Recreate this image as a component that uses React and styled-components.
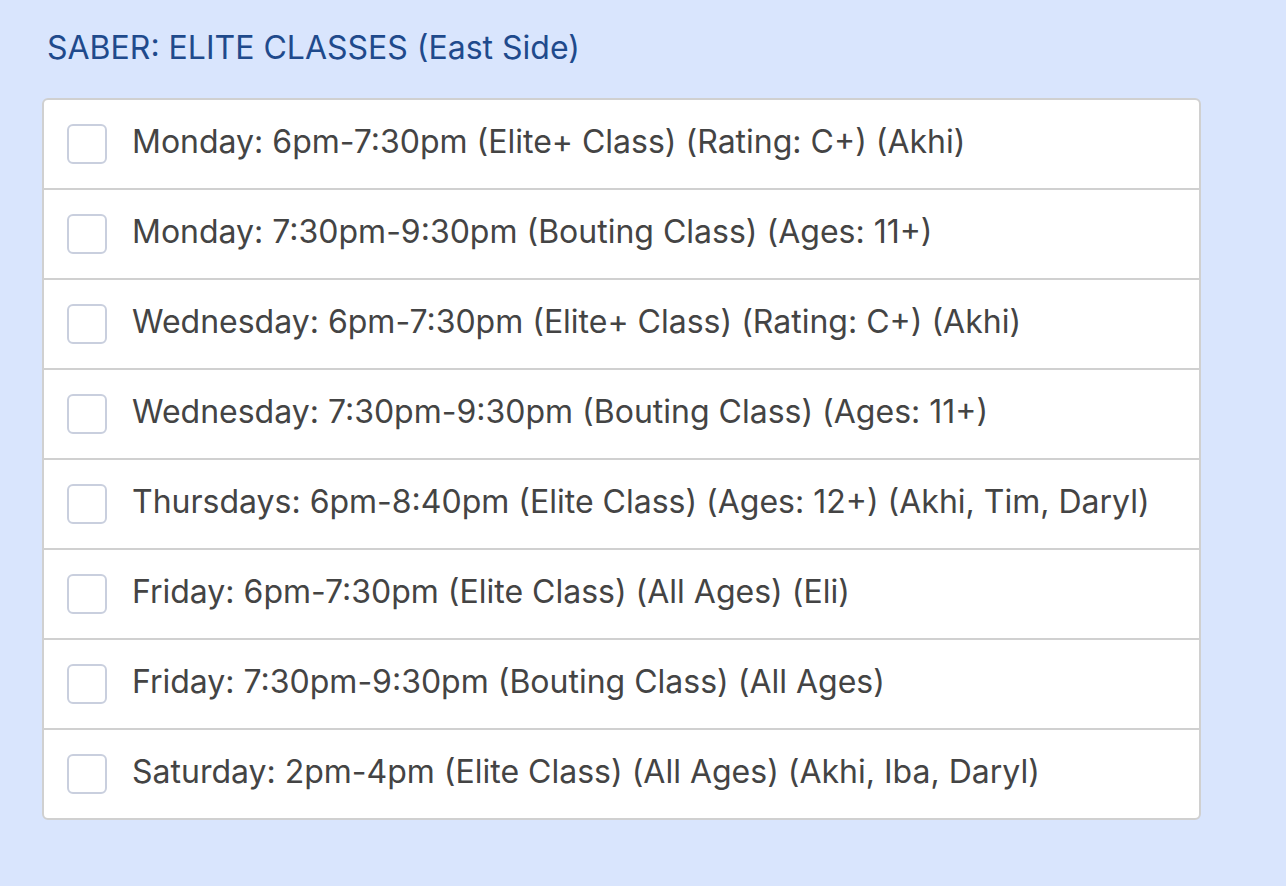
import React from "react";
import styled, { createGlobalStyle } from "styled-components";

const Global = createGlobalStyle`
  html, body { margin: 0; padding: 0; background: #d9e5fd; }
  body { font-family: Inter, "Noto Sans", sans-serif; }
`;

const Page = styled.div`
  min-height: 886px;
  padding: 29px 85px 40px 42px;
  box-sizing: border-box;
`;

const Title = styled.h2`
  margin: 0 0 31px 5px;
  font-size: 32px;
  line-height: 38px;
  font-weight: 400;
  color: #1f4a8c;
`;

const Card = styled.div`
  background: #fff;
  border: 2px solid #d0d0d0;
  border-radius: 6px;
  width: 1159px;
  box-sizing: border-box;
`;

const Row = styled.label`
  display: flex;
  align-items: center;
  gap: 25px;
  height: 88px;
  padding: 0 23px;
  border-top: ${(p) => (p.$first ? "none" : "2px solid #d0d0d0")};
`;

const Box = styled.span`
  width: 40px;
  height: 40px;
  box-sizing: border-box;
  border: 2px solid #c9cfde;
  border-radius: 6px;
  flex: none;
`;

const Text = styled.span`
  font-size: 32px;
  line-height: 39px;
  padding-bottom: 6px;
  color: #444;
`;

const items = [
  "Monday: 6pm-7:30pm (Elite+ Class) (Rating: C+) (Akhi)",
  "Monday: 7:30pm-9:30pm (Bouting Class) (Ages: 11+)",
  "Wednesday: 6pm-7:30pm (Elite+ Class) (Rating: C+) (Akhi)",
  "Wednesday: 7:30pm-9:30pm (Bouting Class) (Ages: 11+)",
  "Thursdays: 6pm-8:40pm (Elite Class) (Ages: 12+) (Akhi, Tim, Daryl)",
  "Friday: 6pm-7:30pm (Elite Class) (All Ages) (Eli)",
  "Friday: 7:30pm-9:30pm (Bouting Class) (All Ages)",
  "Saturday: 2pm-4pm (Elite Class) (All Ages) (Akhi, Iba, Daryl)",
];

export default function App() {
  return (
    <>
      <Global />
      <Page>
        <Title>SABER: ELITE CLASSES (East Side)</Title>
        <Card>
          {items.map((t, i) => (
            <Row key={i} $first={i === 0}>
              <Box />
              <Text>{t}</Text>
            </Row>
          ))}
        </Card>
      </Page>
    </>
  );
}
